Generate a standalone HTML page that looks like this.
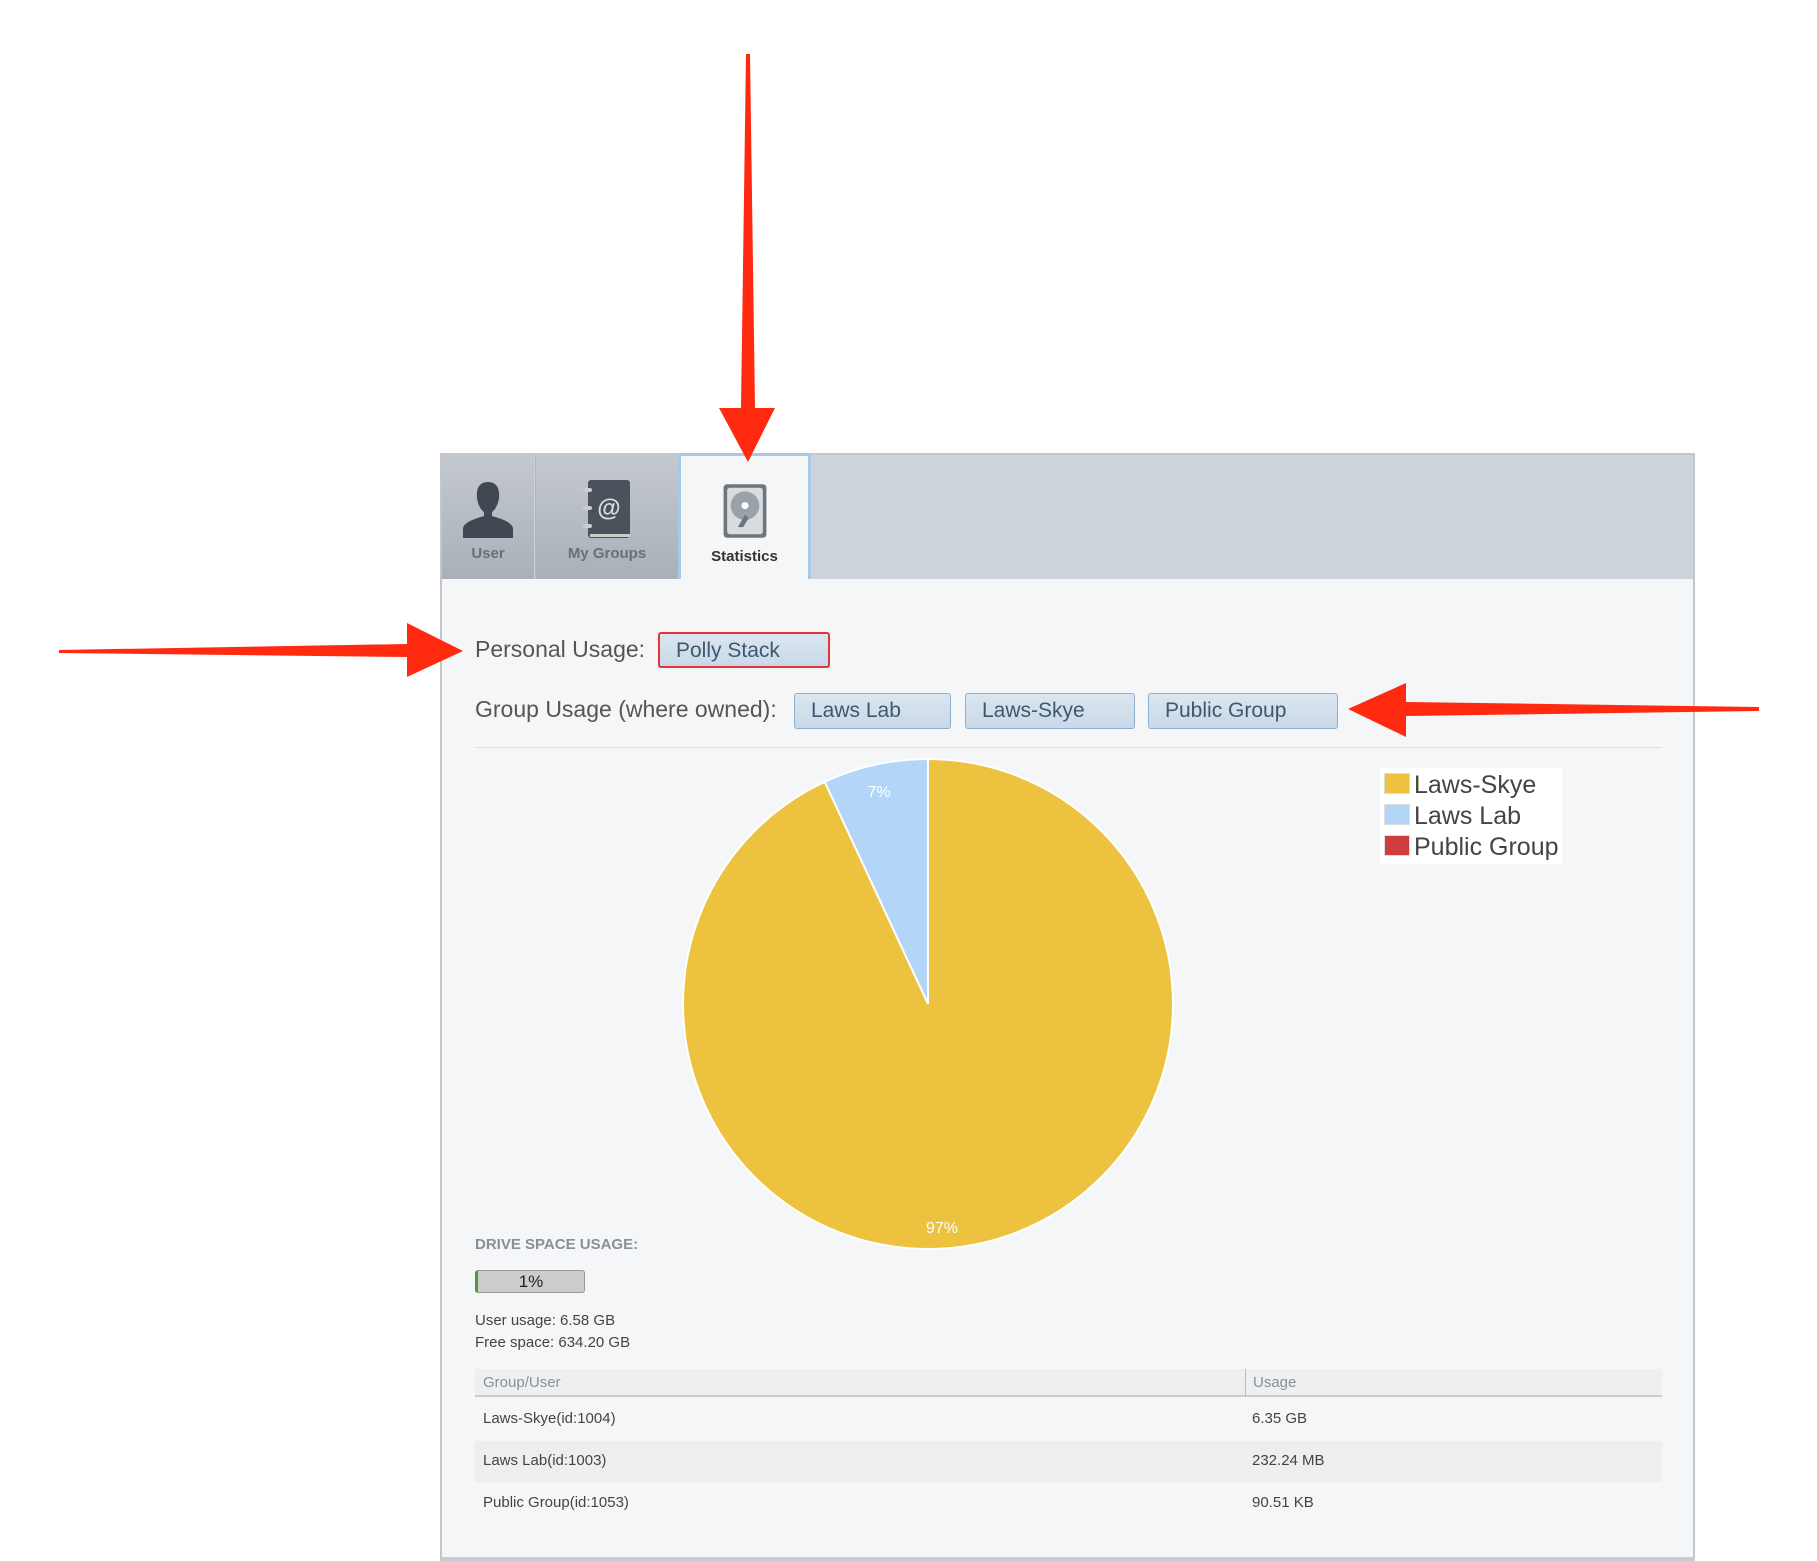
<!DOCTYPE html>
<html><head><meta charset="utf-8"><style>
body{margin:0;width:1817px;height:1559px;background:#fff;position:relative;overflow:hidden;font-family:"Liberation Sans",sans-serif;}
#w{position:absolute;left:0;top:0;width:1817px;height:1559px;transform:translate(-3px,-4px)}
.a{position:absolute}
.panel{left:443px;top:457px;width:1255px;height:1108px;background:#f5f6f8;border:2px solid #c3c7cc;border-bottom:4px solid #c8ccd1;box-sizing:border-box}
.tabbar{left:445px;top:459px;width:1251px;height:124px;background:#ccd3da}
.tab{top:459px;height:124px;text-align:center;font-size:15px;font-weight:bold;color:#6a7079}
.btn{background:linear-gradient(#dbe6f0,#c9d9e8);border:1px solid #8fb0cc;border-radius:3px;box-sizing:border-box;font-size:21px;color:#3e5870;padding-left:16px;line-height:33px}
.t{font-size:15px;color:#444}
</style></head><body><div id="w">
<div class="a panel"></div>
<div class="a tabbar"></div>
<div class="a tab" style="left:445px;width:92px;background:linear-gradient(#c4c9cf,#a9b0b8)">
<svg width="70" height="72" viewBox="0 0 70 70" style="margin-top:20px"><path d="M35 6c-9 0-12 7-11 16 1 7 4 12 7 14v4c-6 2-19 5-21 12v10h50v-10c-2-7-15-10-21-12v-4c3-2 6-7 7-14 1-9-2-16-11-16z" fill="#3f4850"/></svg>
<div style="margin-top:-6px">User</div></div>
<div class="a tab" style="left:538px;width:142px;background:linear-gradient(#c4c9cf,#a9b0b8);border-left:1px solid #b0b6bd">
<svg width="70" height="72" viewBox="0 0 70 70" style="margin-top:20px"><rect x="16" y="4" width="42" height="58" rx="3" fill="#4a535b"/><rect x="18" y="58" width="40" height="3" fill="#ccc"/><g fill="#ccc"><rect x="11" y="12" width="9" height="4" rx="2"/><rect x="11" y="30" width="9" height="4" rx="2"/><rect x="11" y="48" width="9" height="4" rx="2"/></g><text x="37" y="40" font-size="24" fill="#ddd" text-anchor="middle" font-family="Liberation Sans">@</text></svg>
<div style="margin-top:-6px">My Groups</div></div>
<div class="a tab" style="left:681px;top:457px;height:126px;width:133px;background:#f5f6f8;border:3px solid #a9c7e6;border-bottom:none;box-sizing:border-box;color:#333">
<svg width="50" height="62" viewBox="0 0 56 64" style="margin-top:24px"><rect x="4" y="2" width="48" height="60" rx="4" fill="#6d757d"/><rect x="8" y="6" width="40" height="52" rx="3" fill="#d8dcdf"/><circle cx="28" cy="26" r="16" fill="#9aa1a8"/><circle cx="28" cy="26" r="4" fill="#fff"/><path d="M20 50l8-14 4 4-6 10z" fill="#6d757d"/></svg>
<div style="margin-top:2px">Statistics</div></div>

<div class="a" style="left:478px;top:640px;font-size:23px;color:#555">Personal Usage:</div>
<div class="a btn" style="left:661px;top:636px;width:172px;height:36px;border:2px solid #e8333a">Polly Stack</div>
<div class="a" style="left:478px;top:700px;font-size:23px;color:#555">Group Usage (where owned):</div>
<div class="a btn" style="left:797px;top:697px;width:157px;height:36px">Laws Lab</div>
<div class="a btn" style="left:968px;top:697px;width:170px;height:36px">Laws-Skye</div>
<div class="a btn" style="left:1151px;top:697px;width:190px;height:36px">Public Group</div>
<div class="a" style="left:478px;top:751px;width:1187px;height:1px;background:#dde0e3"></div>

<svg class="a" style="left:0;top:0" width="1817" height="1559">
<circle cx="931" cy="1008" r="245" fill="#ecc23f" stroke="#fff" stroke-width="2"/>
<path d="M931 1008L931 763A245 245 0 0 0 827.7 785.8Z" fill="#b3d5f7" stroke="#fff" stroke-width="2"/>
<text x="882" y="801" font-size="16" fill="#fff" text-anchor="middle" font-family="Liberation Sans">7%</text>
<text x="945" y="1237" font-size="16" fill="#fff" text-anchor="middle" font-family="Liberation Sans">97%</text>
<polygon points="749,58 753,58 758,412 778,412 751,466 722,412 744,412" fill="#ff2a10"/>
<polygon points="62,654 410,648 410,627 466,655 410,681 410,661 62,657" fill="#ff2a10"/>
<polygon points="1762,711 1409,706 1409,687 1351,713 1409,741 1409,720 1762,715" fill="#ff2a10"/>
</svg>
<div class="a" style="left:1383px;top:772px;width:182px;height:96px;background:#fff"></div>
<div class="a" style="left:1387px;top:777px;width:24px;height:19px;background:#ecc23f;border:1px solid #ddd"></div>
<div class="a" style="left:1387px;top:808px;width:24px;height:19px;background:#b3d5f7;border:1px solid #ddd"></div>
<div class="a" style="left:1387px;top:839px;width:24px;height:19px;background:#cc3e3e;border:1px solid #ddd"></div>
<div class="a" style="left:1417px;top:774px;font-size:25px;color:#444;line-height:31px">Laws-Skye<br>Laws Lab<br>Public Group</div>

<div class="a" style="left:478px;top:1240px;font-size:15px;font-weight:bold;color:#8a8f96">DRIVE SPACE USAGE:</div>
<div class="a" style="left:478px;top:1274px;width:110px;height:23px;background:#ccc;border:1px solid #999;border-left:3px solid #4a9a3a;border-radius:3px;box-sizing:border-box;text-align:center;font-size:17px;line-height:21px;color:#222">1%</div>
<div class="a t" style="left:478px;top:1316px">User usage: 6.58 GB</div>
<div class="a t" style="left:478px;top:1338px">Free space: 634.20 GB</div>
<div class="a" style="left:478px;top:1373px;width:1187px;height:26px;background:#eeeff0;border-bottom:2px solid #ccc"></div>
<div class="a" style="left:1248px;top:1373px;width:1px;height:27px;background:#bbb"></div>
<div class="a t" style="left:486px;top:1378px;color:#8a8f96">Group/User</div>
<div class="a t" style="left:1256px;top:1378px;color:#8a8f96">Usage</div>
<div class="a" style="left:478px;top:1445px;width:1187px;height:41px;background:#eeeeee"></div>
<div class="a t" style="left:486px;top:1414px">Laws-Skye(id:1004)</div><div class="a t" style="left:1255px;top:1414px">6.35 GB</div>
<div class="a t" style="left:486px;top:1456px">Laws Lab(id:1003)</div><div class="a t" style="left:1255px;top:1456px">232.24 MB</div>
<div class="a t" style="left:486px;top:1498px">Public Group(id:1053)</div><div class="a t" style="left:1255px;top:1498px">90.51 KB</div>
</div></body></html>
